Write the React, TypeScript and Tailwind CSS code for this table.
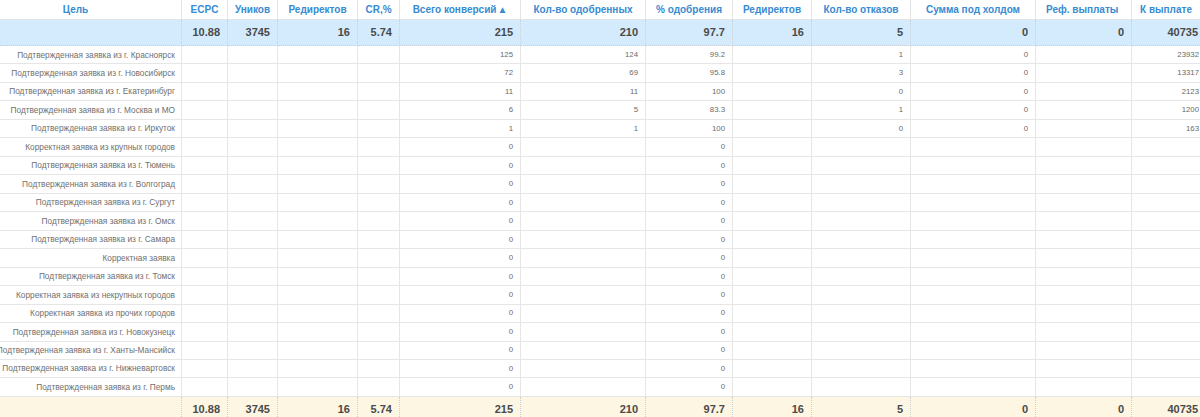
import React from "react";

type Row = {
  label: string;
  total?: string;
  approved?: string;
  pct?: string;
  rejects?: string;
  hold?: string;
  pay?: string;
};

const rows: Row[] = [
  { label: "Подтвержденная заявка из г. Красноярск", total: "125", approved: "124", pct: "99.2", rejects: "1", hold: "0", pay: "23932" },
  { label: "Подтвержденная заявка из г. Новосибирск", total: "72", approved: "69", pct: "95.8", rejects: "3", hold: "0", pay: "13317" },
  { label: "Подтвержденная заявка из г. Екатеринбург", total: "11", approved: "11", pct: "100", rejects: "0", hold: "0", pay: "2123" },
  { label: "Подтвержденная заявка из г. Москва и МО", total: "6", approved: "5", pct: "83.3", rejects: "1", hold: "0", pay: "1200" },
  { label: "Подтвержденная заявка из г. Иркуток", total: "1", approved: "1", pct: "100", rejects: "0", hold: "0", pay: "163" },
  { label: "Корректная заявка из крупных городов", total: "0", pct: "0" },
  { label: "Подтвержденная заявка из г. Тюмень", total: "0", pct: "0" },
  { label: "Подтвержденная заявка из г. Волгоград", total: "0", pct: "0" },
  { label: "Подтвержденная заявка из г. Сургут", total: "0", pct: "0" },
  { label: "Подтвержденная заявка из г. Омск", total: "0", pct: "0" },
  { label: "Подтвержденная заявка из г. Самара", total: "0", pct: "0" },
  { label: "Корректная заявка", total: "0", pct: "0" },
  { label: "Подтвержденная заявка из г. Томск", total: "0", pct: "0" },
  { label: "Корректная заявка из некрупных городов", total: "0", pct: "0" },
  { label: "Корректная заявка из прочих городов", total: "0", pct: "0" },
  { label: "Подтвержденная заявка из г. Новокузнецк", total: "0", pct: "0" },
  { label: "Подтвержденная заявка из г. Ханты-Мансийск", total: "0", pct: "0" },
  { label: "Подтвержденная заявка из г. Нижневартовск", total: "0", pct: "0" },
  { label: "Подтвержденная заявка из г. Пермь", total: "0", pct: "0" },
];

const headers = [
  "ECPC",
  "Уников",
  "Редиректов",
  "CR,%",
  "Всего конверсий",
  "Кол-во одобренных",
  "% одобрения",
  "Редиректов",
  "Кол-во отказов",
  "Сумма под холдом",
  "Реф. выплаты",
  "К выплате",
];

const totals = ["10.88", "3745", "16", "5.74", "215", "210", "97.7", "16", "5", "0", "0", "40735"];

const grid =
  "grid grid-cols-[182px_46px_50px_80px_42px_121px_125px_87px_79px_99px_125px_96px_68px]";

function SummaryRow({ bg }: { bg: string }) {
  return (
    <div className={`${grid} h-[26px] ${bg}`}>
      <div className="border-r border-b border-dotted border-[#c9cfd4]" />
      {totals.map((t, i) => (
        <div
          key={i}
          className={`flex items-center justify-end border-b border-dotted border-[#c9cfd4] text-[11px] font-bold text-[#4a4a4a] ${
            i === totals.length - 1 ? "pr-[2px]" : "border-r pr-[7px]"
          }`}
        >
          {t}
        </div>
      ))}
    </div>
  );
}

function Cell({ v, last }: { v?: string; last?: boolean }) {
  return (
    <div
      className={`flex items-center justify-end border-b border-[#e6e6e6] text-[7.8px] text-[#6a6a6a] ${
        last ? "pr-[1px]" : "border-r pr-[7px]"
      }`}
    >
      {v ?? ""}
    </div>
  );
}

export default function App() {
  return (
    <div className="w-[1200px] h-[417px] overflow-hidden bg-white font-['Liberation_Sans',Arial,sans-serif]">
      {/* header */}
      <div className={`${grid} h-[20px]`}>
        <div className="flex items-center justify-center pr-[30px] border-r border-b border-[#e3e3e3] text-[10px] font-bold text-[#378bd2]">
          Цель
        </div>
        {headers.map((h, i) => (
          <div
            key={i}
            className={`flex items-center overflow-hidden whitespace-nowrap border-b border-[#e3e3e3] text-[10px] font-bold text-[#378bd2] ${
              i === headers.length - 1 ? "justify-center" : "border-r"
            } ${i === 10 ? "justify-start pl-[10px]" : "justify-center"}`}
          >
            {i === 10 ? (
              <span className="block w-[75px] overflow-hidden">{h}</span>
            ) : (
              h
            )}
            {i === 4 && <span className="ml-[1px] text-[10px] leading-none">▲</span>}
          </div>
        ))}
      </div>

      <SummaryRow bg="bg-[#d4ebfd]" />

      {rows.map((r, idx) => (
        <div key={idx} className={`${grid} h-[18.47px]`}>
          <div className="flex items-center justify-end whitespace-nowrap border-r border-b border-[#e6e6e6] pr-[6px] text-[8.3px] text-[#707070]">
            {r.label}
          </div>
          <Cell />
          <Cell />
          <Cell />
          <Cell />
          <Cell v={r.total} />
          <Cell v={r.approved} />
          <Cell v={r.pct} />
          <Cell />
          <Cell v={r.rejects} />
          <Cell v={r.hold} />
          <Cell />
          <Cell v={r.pay} last />
        </div>
      ))}

      <SummaryRow bg="bg-[#fdf6e2]" />
    </div>
  );
}
